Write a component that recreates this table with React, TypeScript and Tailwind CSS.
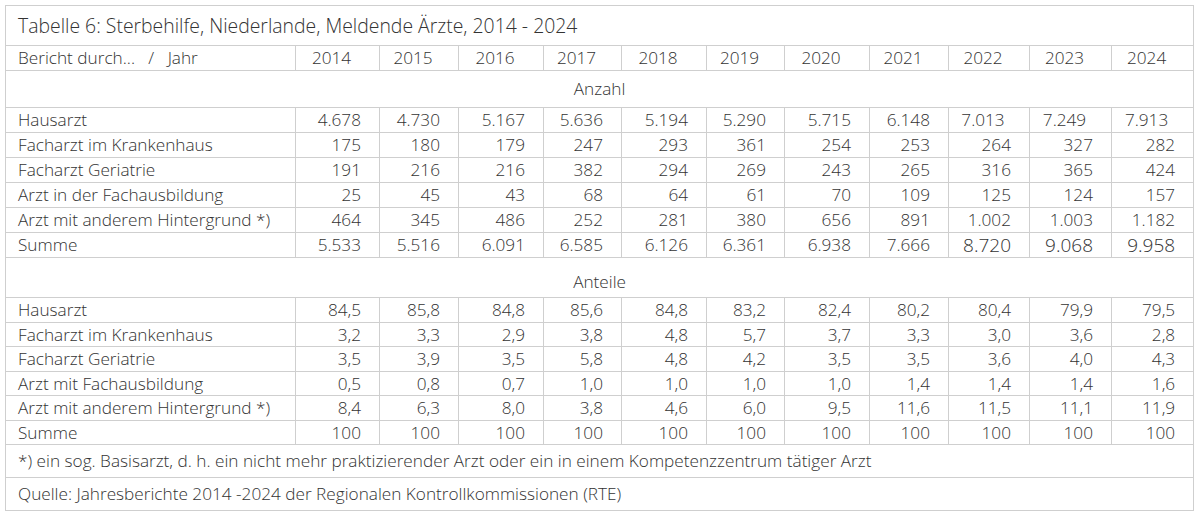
import React from "react";

const years = ["2014","2015","2016","2017","2018","2019","2020","2021","2022","2023","2024"];
const widths = [84,79,85,78,85,78,85,79,81,82,82];

const anzahl: [string, string[]][] = [
  ["Hausarzt", ["4.678","4.730","5.167","5.636","5.194","5.290","5.715","6.148","7.013","7.249","7.913"]],
  ["Facharzt im Krankenhaus", ["175","180","179","247","293","361","254","253","264","327","282"]],
  ["Facharzt Geriatrie", ["191","216","216","382","294","269","243","265","316","365","424"]],
  ["Arzt in der Fachausbildung", ["25","45","43","68","64","61","70","109","125","124","157"]],
  ["Arzt mit anderem Hintergrund *)", ["464","345","486","252","281","380","656","891","1.002","1.003","1.182"]],
  ["Summe", ["5.533","5.516","6.091","6.585","6.126","6.361","6.938","7.666","8.720","9.068","9.958"]],
];

const anteile: [string, string[]][] = [
  ["Hausarzt", ["84,5","85,8","84,8","85,6","84,8","83,2","82,4","80,2","80,4","79,9","79,5"]],
  ["Facharzt im Krankenhaus", ["3,2","3,3","2,9","3,8","4,8","5,7","3,7","3,3","3,0","3,6","2,8"]],
  ["Facharzt Geriatrie", ["3,5","3,9","3,5","5,8","4,8","4,2","3,5","3,5","3,6","4,0","4,3"]],
  ["Arzt mit Fachausbildung", ["0,5","0,8","0,7","1,0","1,0","1,0","1,0","1,4","1,4","1,4","1,6"]],
  ["Arzt mit anderem Hintergrund *)", ["8,4","6,3","8,0","3,8","4,6","6,0","9,5","11,6","11,5","11,1","11,9"]],
  ["Summe", ["100","100","100","100","100","100","100","100","100","100","100"]],
];

const cell = "border border-[#cfcfcf] p-0";

export default function App() {
  return (
    <div className="w-[1200px] h-[516px] bg-white pt-[5px] pl-[5px]" style={{ fontFamily: '"Open Sans", "Liberation Sans", sans-serif' }}>
      <table className="table-fixed border-collapse w-[1189px] text-[#333] font-light text-[17.2px] leading-none">
        <colgroup>
          <col style={{ width: 290 }} />
          {widths.map((w, i) => <col key={i} style={{ width: w }} />)}
        </colgroup>
        <tbody>
          <tr className="h-[40px]">
            <td colSpan={12} className={`${cell} pl-[12px] text-[19.4px]`}>Tabelle 6: Sterbehilfe, Niederlande, Meldende Ärzte, 2014 - 2024</td>
          </tr>
          <tr className="h-[25px]">
            <td className={`${cell} pl-[12px]`}>Bericht durch...&nbsp;&nbsp;&nbsp;/&nbsp;&nbsp;&nbsp;Jahr</td>
            {years.map((y) => <td key={y} className={`${cell} text-center pr-[12px]`}>{y}</td>)}
          </tr>
          <tr className="h-[37px]">
            <td colSpan={12} className={`${cell} text-center`}>Anzahl</td>
          </tr>
          {anzahl.map(([label, vals], r) => (
            <tr key={label} className="h-[25px]">
              <td className={`${cell} pl-[12px]`}>{label}</td>
              {vals.map((v, i) => (
                <td
                  key={i}
                  className={`${cell} ${r === 0 && i >= 8 ? "text-center pr-[12px]" : "text-right pr-[18px]"} ${r === 5 && i >= 8 ? "text-[19px]" : ""}`}
                >
                  {v}
                </td>
              ))}
            </tr>
          ))}
          <tr className="h-[40px]">
            <td colSpan={12} className={`${cell} text-center pt-[9px]`}>Anteile</td>
          </tr>
          {anteile.map(([label, vals]) => (
            <tr key={label + "a"} className="h-[24.5px]">
              <td className={`${cell} pl-[12px]`}>{label}</td>
              {vals.map((v, i) => (
                <td key={i} className={`${cell} text-right pr-[18px]`}>{v}</td>
              ))}
            </tr>
          ))}
          <tr className="h-[33px]">
            <td colSpan={12} className={`${cell} pl-[12px]`}>*) ein sog. Basisarzt, d. h. ein nicht mehr praktizierender Arzt oder ein in einem Kompetenzzentrum tätiger Arzt</td>
          </tr>
          <tr className="h-[33px]">
            <td colSpan={12} className={`${cell} pl-[12px]`}>Quelle: Jahresberichte 2014 -2024 der Regionalen Kontrollkommissionen (RTE)</td>
          </tr>
        </tbody>
      </table>
    </div>
  );
}
